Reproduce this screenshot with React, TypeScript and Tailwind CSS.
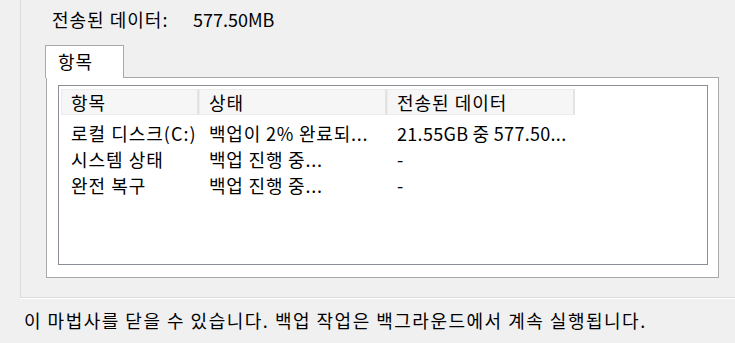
import React from "react";

const rows = [
  { name: "로컬 디스크(C:)", status: "백업이 2% 완료되...", data: "21.55GB 중 577.50..." },
  { name: "시스템 상태", status: "백업 진행 중...", data: "-" },
  { name: "완전 복구", status: "백업 진행 중...", data: "-" },
];

const cols = ["w-[138px]", "w-[188px]", "w-[188px]"];

export default function App() {
  return (
    <div className="w-[735px] h-[343px] overflow-hidden bg-[#f0f0f0] text-[18px] text-black font-['Noto_Sans_CJK_KR','Noto_Sans',sans-serif]">
      <div className="ml-[20px] h-[298px] border-l border-b border-[#dcdcdc] shadow-[0_1px_0_#ffffff]">
        <div className="flex pl-[31px] pt-[7px] leading-[24px]">
          <span className="w-[141px] tracking-[1px]">전송된 데이터:</span>
          <span>577.50MB</span>
        </div>

        <div className="mt-[14px] ml-[24px] w-[79px] h-[33px] -mb-px relative z-10 bg-white border border-b-0 border-[#a9a9a9] pl-[12px] leading-[30px] tracking-[1px]">
          항목
        </div>
        <div className="ml-[25px] w-[673px] h-[201px] border border-[#a9a9a9] bg-white pl-[11px] pt-[7px]">
          <div className="w-[650px] h-[180px] border border-[#8a8e96] pt-[3px] px-[2px]">
            <div className="flex h-[26px] leading-[24px] tracking-[1px]">
              {["항목", "상태", "전송된 데이터"].map((h, i) => (
                <div
                  key={h}
                  className={`${cols[i]} shrink-0 bg-[#f6f6f6] border border-[#ececec] border-r-2 border-r-[#e3e3e3] pl-[9px]`}
                >
                  {h}
                </div>
              ))}
            </div>
            <div className="pt-[5px]">
              {rows.map((r) => (
                <div key={r.name} className="flex h-[26px] leading-[26px] whitespace-nowrap">
                  <div className={`${cols[0]} shrink-0 pl-[10px] tracking-[1px]`}>{r.name}</div>
                  <div className={`${cols[1]} shrink-0 pl-[10px] tracking-[0.8px]`}>{r.status}</div>
                  <div className={`${cols[2]} shrink-0 pl-[10px] tracking-[0.3px]`}>{r.data}</div>
                </div>
              ))}
            </div>
          </div>
        </div>
      </div>
      <div className="pl-[24px] pt-[10px] leading-[24px] tracking-[1.5px]">
        이 마법사를 닫을 수 있습니다. 백업 작업은 백그라운드에서 계속 실행됩니다.
      </div>
    </div>
  );
}
